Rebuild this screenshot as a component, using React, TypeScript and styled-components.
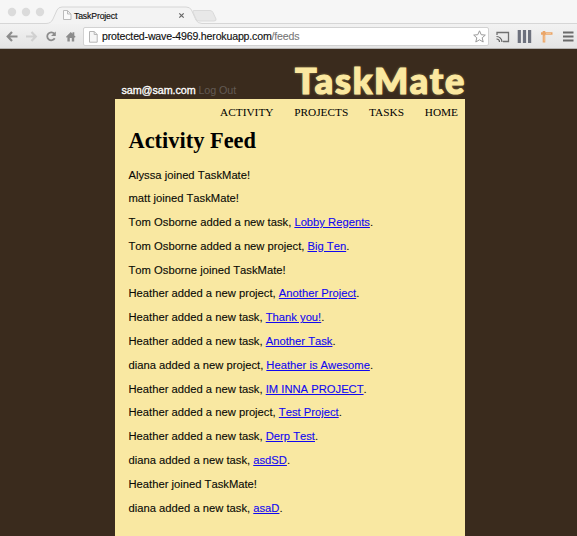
import React from "react";
import styled, { createGlobalStyle } from "styled-components";

const Global = createGlobalStyle`
  * { box-sizing: border-box; }
  html, body { margin: 0; background: #3a2b1d; }
  body { overflow: hidden; font-family: "Liberation Sans", Arial, sans-serif; }
`;
const Window = styled.div`
  width: 577px;
  height: 536px;
  display: flex;
  flex-direction: column;
`;
const TabStrip = styled.div`
  height: 24px;
  flex: none;
  background: #f6f6f6;
  display: grid;
  > * { grid-area: 1 / 1; }
`;
const TabShape = styled.svg`
  display: block;
`;
const TabLabel = styled.div`
  padding: 9px 0 0 74px;
  font-size: 8.7px;
  line-height: 14px;
  letter-spacing: -0.15px;
  color: #111;
  -webkit-text-stroke: 0.15px #111;
`;
const Toolbar = styled.div`
  height: 25px;
  flex: none;
  display: flex;
  align-items: center;
  padding: 1px 0 0 6px;
  background: linear-gradient(#f2f2f2, #e4e4e4);
  border-bottom: 1px solid #b4b2b0;
`;
const NavIcons = styled.svg`
  flex: none;
  width: 77px;
  height: 20px;
`;
const AddressBar = styled.div`
  width: 406px;
  height: 19px;
  display: flex;
  align-items: center;
  padding: 0 2px 0 5px;
  background: #fff;
  border: 1px solid #d2d2d2;
  border-radius: 2px;
`;
const Url = styled.div`
  flex: 1;
  padding-left: 4px;
  font-size: 10.6px;
  letter-spacing: -0.18px;
  line-height: 17px;
  white-space: nowrap;
  color: #111;
  -webkit-text-stroke: 0.15px #111;
`;
const Path = styled.span`
  color: #777;
  -webkit-text-stroke: 0.1px #777;
`;
const Extensions = styled.svg`
  width: 88px;
  height: 20px;
`;
const Page = styled.main`
  flex: 1;
  width: 350px;
  margin-left: 115px;
  display: flex;
  flex-direction: column;
`;
const Header = styled.header`
  height: 50px;
  flex: none;
  display: flex;
  justify-content: space-between;
  align-items: flex-end;
  padding: 0 0 0 6.5px;
`;
const Account = styled.div`
  font-size: 10.8px;
  letter-spacing: -0.1px;
  line-height: 13px;
  padding-bottom: 2px;
  color: #fff;
  white-space: nowrap;
  -webkit-text-stroke: 0.3px #fff;
`;
const LogOut = styled.a`
  color: #625a54;
  -webkit-text-stroke: 0;
`;
const Brand = styled.div`
  font-family: Lato, sans-serif;
  font-weight: 900;
  font-size: 36px;
  letter-spacing: 1.8px;
  line-height: 38px;
  height: 38px;
  margin-right: -1px;
  color: #fbe8a0;
  -webkit-text-stroke: 1.2px #fbe8a0;
  text-shadow: 0 0 3px #b09b5e;
`;
const Panel = styled.section`
  flex: 1;
  background: #f9e8a2;
  padding-left: 13.5px;
`;
const Menu = styled.nav`
  display: flex;
  justify-content: flex-end;
  gap: 20.8px;
  padding: 6px 7px 0 0;
  font-family: "Liberation Serif", "Times New Roman", serif;
  font-size: 11.3px;
  line-height: 14px;
  color: #000;
`;
const Title = styled.h1`
  margin: 8.5px 0 15px;
  font-family: "Liberation Serif", "Times New Roman", serif;
  font-size: 22.4px;
  line-height: 26px;
`;
const Entry = styled.p`
  margin: 0 0 10.8px;
  font-size: 11.22px;
  line-height: 13px;
  font-kerning: none;
  color: #0a0a05;
  white-space: nowrap;
  -webkit-text-stroke: 0.12px currentColor;
`;
const FeedLink = styled.a`
  color: #1209f0;
  text-decoration: underline;
`;

type Item = { who: string; kind?: string; link?: string };
const items: Item[] = [
  { who: "Alyssa" },
  { who: "matt" },
  { who: "Tom Osborne", kind: "task", link: "Lobby Regents" },
  { who: "Tom Osborne", kind: "project", link: "Big Ten" },
  { who: "Tom Osborne" },
  { who: "Heather", kind: "project", link: "Another Project" },
  { who: "Heather", kind: "task", link: "Thank you!" },
  { who: "Heather", kind: "task", link: "Another Task" },
  { who: "diana", kind: "project", link: "Heather is Awesome" },
  { who: "Heather", kind: "task", link: "IM INNA PROJECT" },
  { who: "Heather", kind: "project", link: "Test Project" },
  { who: "Heather", kind: "task", link: "Derp Test" },
  { who: "diana", kind: "task", link: "asdSD" },
  { who: "Heather" },
  { who: "diana", kind: "task", link: "asaD" },
];

const PageIcon = () => (
  <svg width="9" height="12" viewBox="0 0 9 12" fill="#f6f6f6" stroke="#b5b5b5" strokeWidth="1">
    <path d="M.5.5h4.7l3 3v7.7H.5zM5.2.5v3h3" />
  </svg>
);

export default function App() {
  return (
    <Window>
      <Global />
      <TabStrip>
        <TabShape width="577" height="24" viewBox="0 0 577 24">
          <path d="M0 23.5H46Q51 23.5 53 19L57 10Q58.5 7 62 7H186Q190 7 191.500 10L196 20Q197.500 23.500 202 23.500H577V25H0z" fill="#f3f3f3" stroke="#d6d6d6" />
          <path d="M194 10.500H210Q212 10.500 213 12.500L216 19Q216.500 21 214 21H199Q197 21 196 19L193 12Q192.500 10.500 194 10.500z" fill="#e8e8e8" stroke="#dadada" />
          <g fill="#dbdbdb"><circle cx="12" cy="12" r="4.200" /><circle cx="26" cy="12" r="4.200" /><circle cx="40" cy="12" r="4.200" /></g>
          <path d="M63.500 10.500h4l3.500 3.500v5.500h-7.500zM67.500 10.500v3.500h3.500" fill="#fafafa" stroke="#bbb" />
          <path d="M179.300 13.300l4.400 4.400m0-4.400l-4.400 4.400" stroke="#666" strokeWidth="1.200" />
        </TabShape>
        <TabLabel>TaskProject</TabLabel>
      </TabStrip>
      <Toolbar>
        <NavIcons viewBox="0 0 77 20" fill="none" stroke="#8c8c8c" strokeWidth="2.2">
          <path d="M11.500 9.500H2M6 5L1.700 9.500L6 14" />
          <path d="M20 9.500H29.500M25.500 5L29.800 9.500L25.500 14" stroke="#d0d0d0" />
          <path d="M48.300 6.700A4 4 0 1 0 48.700 11.300" strokeWidth="1.800" />
          <path d="M45 9H49.800V4.500z" fill="#8c8c8c" stroke="none" />
          <path d="M60 9.800L64.800 5L66.500 6.700V5.300H68.300V8.500L69.600 9.800L68.800 10.700L68.200 10.200V14.500H65.800V11H63.800V14.500H61.400V10.200L60.800 10.700z" fill="#8c8c8c" stroke="none" />
        </NavIcons>
        <AddressBar>
          <PageIcon />
          <Url>protected-wave-4969.herokuapp.com<Path>/feeds</Path></Url>
          <svg width="13" height="13" viewBox="0 0 13 13" fill="#fff" stroke="#999" strokeLinejoin="round">
            <path d="M6.500 .8L8.200 4.700L12.300 5.100L9.200 7.800L10.200 12L6.500 9.800L2.800 12L3.800 7.800L.7 5.100L4.800 4.700z" />
          </svg>
        </AddressBar>
        <Extensions viewBox="0 0 88 20" fill="none">
          <path d="M8 8V5.500H19.500V14.500H14" stroke="#707070" strokeWidth="1.300" />
          <path d="M7.500 9.500a5.500 5.500 0 0 1 5.500 5.500M7.500 12a3 3 0 0 1 3 3" stroke="#606060" strokeWidth="1.200" />
          <path d="M30.300 3V16M35.500 3V16M40.600 3V16" stroke="#6d717d" strokeWidth="3.200" />
          <path d="M52 6.500H63.500M55 4V15.500" stroke="#eaa568" strokeWidth="2.600" />
          <path d="M55.200 8.500V14.500M57 6.500H62" stroke="#f6c99c" strokeWidth=".8" />
          <path d="M74 5.500H84.500M74 9.500H84.500M74 13.500H84.500" stroke="#6a6a6a" strokeWidth="2" />
        </Extensions>
      </Toolbar>
      <Page>
        <Header>
          <Account>sam@sam.com <LogOut>Log Out</LogOut></Account>
          <Brand>TaskMate</Brand>
        </Header>
        <Panel>
          <Menu><span>ACTIVITY</span><span>PROJECTS</span><span>TASKS</span><span>HOME</span></Menu>
          <Title>Activity Feed</Title>
          {items.map((it, i) => (
            <Entry key={i}>
              {it.link ? <>{it.who} added a new {it.kind}, <FeedLink>{it.link}</FeedLink>.</> : <>{it.who} joined TaskMate!</>}
            </Entry>
          ))}
        </Panel>
      </Page>
    </Window>
  );
}
